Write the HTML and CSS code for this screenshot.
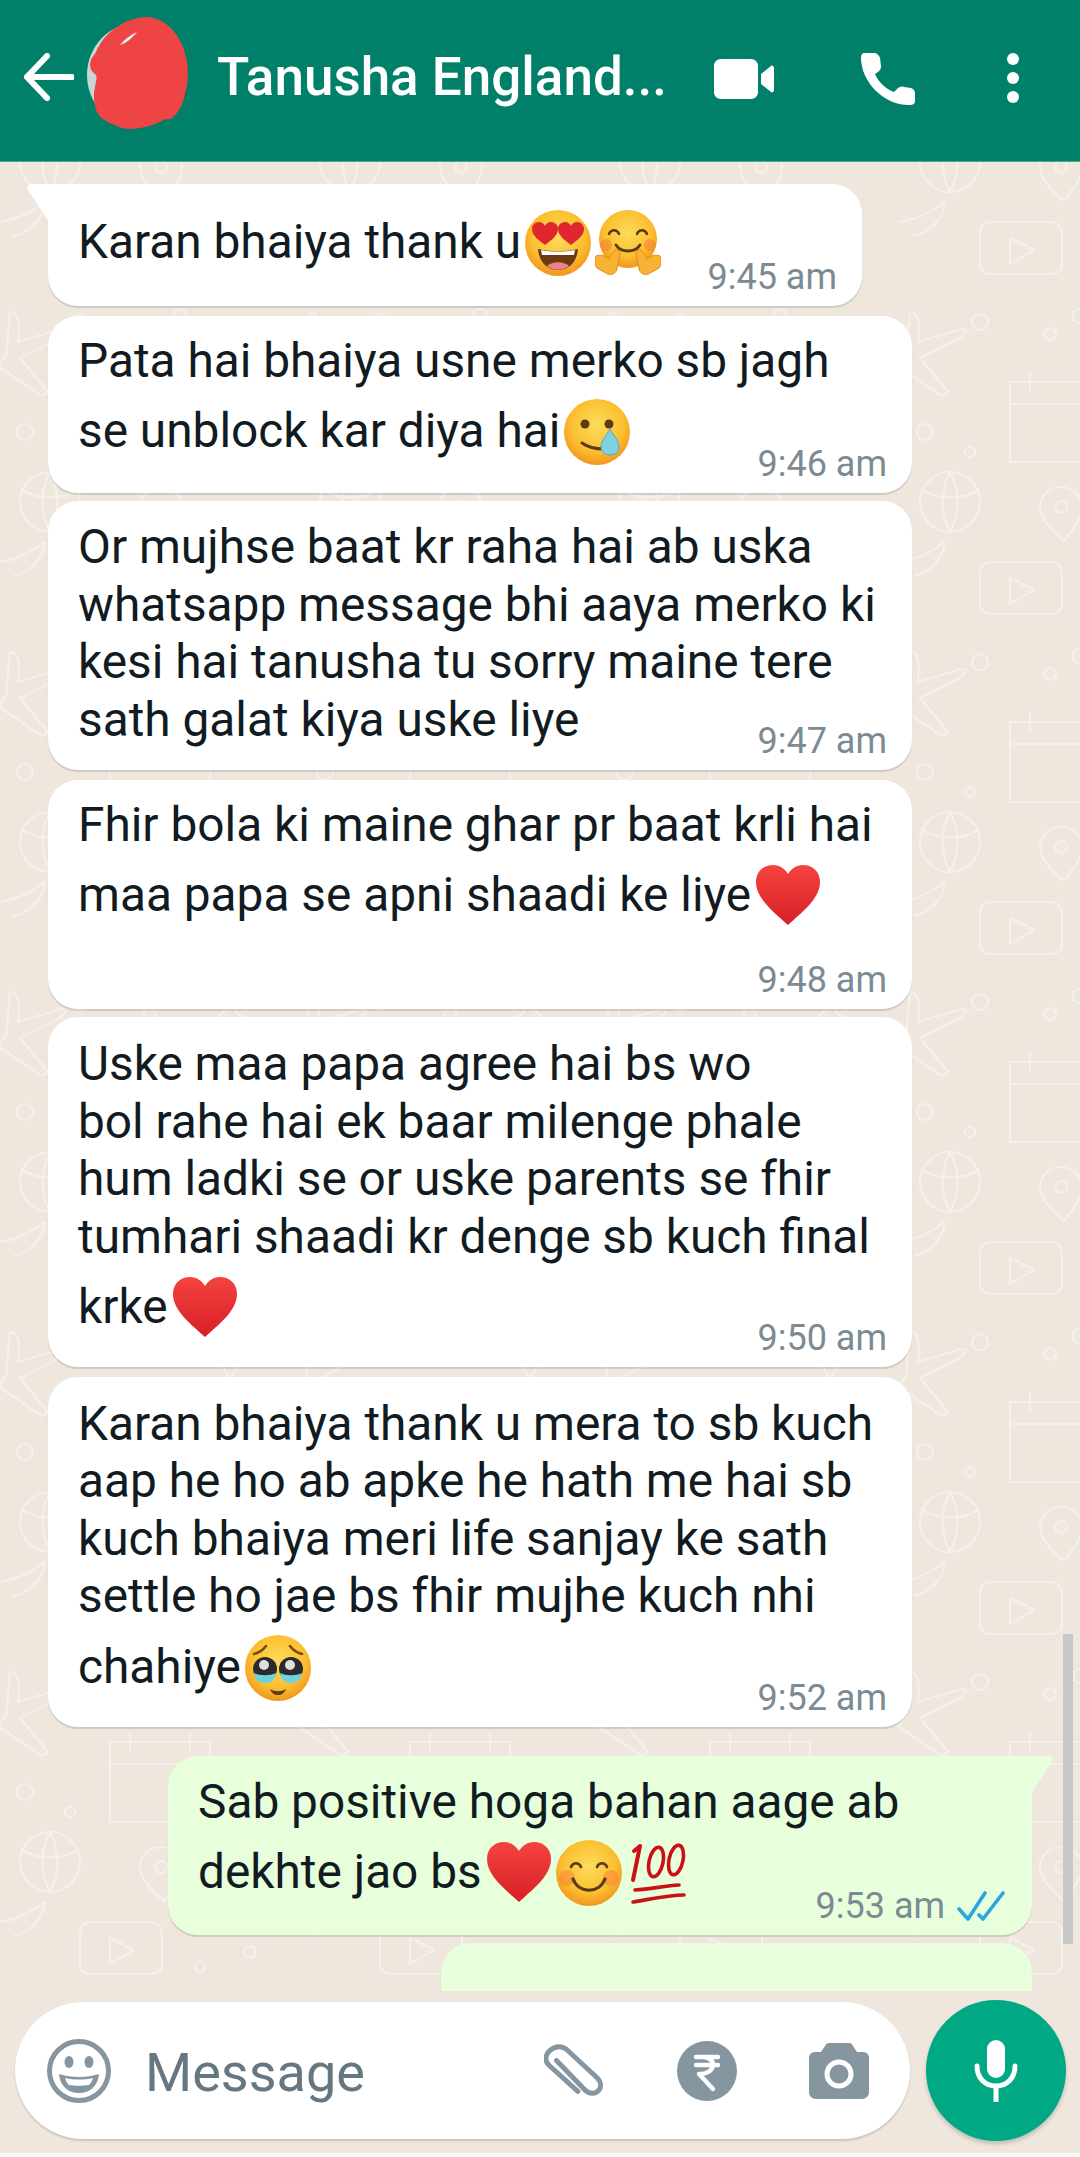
FILE: index.html
```html
<!DOCTYPE html>
<html>
  <head>
    <title>Tanusha England chat</title>
    <link rel="stylesheet" href="styles.css">
  </head>
  <body>
    <svg class="defs" width="0" height="0">
      <defs>
        <radialGradient id="skin" cx="50%" cy="40%" r="62%">
          <stop offset="0" stop-color="#fddc5c"/>
          <stop offset="0.65" stop-color="#fbbf2f"/>
          <stop offset="1" stop-color="#f0911c"/>
        </radialGradient>
        <linearGradient id="red" x1="0" y1="0" x2="0" y2="1">
          <stop offset="0" stop-color="#f4433f"/>
          <stop offset="1" stop-color="#d81f26"/>
        </linearGradient>
        <symbol id="e-hearteyes" viewBox="0 0 66 66">
          <circle cx="33" cy="33" r="33" fill="url(#skin)"/>
          <path d="M20 35C15 31 7 26 7 19c0-4 3-7 7-7 3 0 5 2 6 4 1-2 3-4 6-4 4 0 7 3 7 7 0 7-8 12-13 16z" fill="#e0262e"/>
          <path d="M46 35c-5-4-13-9-13-16 0-4 3-7 7-7 3 0 5 2 6 4 1-2 3-4 6-4 4 0 7 3 7 7 0 7-8 12-13 16z" fill="#e0262e"/>
          <path d="M13 39c13 3 27 3 40 0-1 13-9 21-20 21S14 52 13 39z" fill="#6b3a10"/>
          <path d="M16 40c11 2 23 2 34 0l-1 5H17z" fill="#fff"/>
          <path d="M22 56c6-5 16-5 22 0-6 5-16 5-22 0z" fill="#f0808a"/>
        </symbol>
        <symbol id="e-hug" viewBox="0 0 66 66">
          <circle cx="33" cy="29" r="29" fill="url(#skin)"/>
          <circle cx="11" cy="35" r="6" fill="#f6783c" opacity=".5"/>
          <circle cx="55" cy="35" r="6" fill="#f6783c" opacity=".5"/>
          <path d="M14 24c2-5 8-5 10 0M42 24c2-5 8-5 10 0" fill="none" stroke="#5b3a10" stroke-width="2.4" stroke-linecap="round"/>
          <path d="M21 35c5 8 19 8 24 0" fill="none" stroke="#5b3a10" stroke-width="2.8" stroke-linecap="round"/>
          <path d="M1 46c5-2 10 0 13 3l5-8c2-3 6-1 6 3l-3 15c-1 5-7 7-11 4L2 58c-2-2-3-9-1-12z" fill="#f9b233" stroke="#e38a16" stroke-width="1"/>
          <path d="M65 46c-5-2-10 0-13 3l-5-8c-2-3-6-1-6 3l3 15c1 5 7 7 11 4l9-5c2-2 3-9 1-12z" fill="#f9b233" stroke="#e38a16" stroke-width="1"/>
        </symbol>
        <symbol id="e-tear" viewBox="0 0 66 66">
          <circle cx="33" cy="33" r="33" fill="url(#skin)"/>
          <circle cx="21" cy="25" r="4.5" fill="#5b3a14"/>
          <circle cx="45" cy="25" r="4.5" fill="#5b3a14"/>
          <path d="M18 44c7 5 14 6 22 6" fill="none" stroke="#5b3a14" stroke-width="3" stroke-linecap="round"/>
          <path d="M46 30c3 6 9 11 9 18 0 5-4 8-9 8s-9-3-9-8c0-7 6-12 9-18z" fill="#7fd0e0" stroke="#52a9c4" stroke-width="1"/>
        </symbol>
        <symbol id="e-heart" viewBox="0 0 66 66">
          <path d="M33 62C20 50 1 36 1 19 1 8 9 2 18 2c7 0 12 4 15 9 3-5 8-9 15-9 9 0 17 6 17 17 0 17-19 31-32 43z" fill="url(#red)"/>
        </symbol>
        <symbol id="e-plead" viewBox="0 0 66 66">
          <circle cx="33" cy="33" r="33" fill="url(#skin)"/>
          <path d="M9 19c4-1 9-4 12-8M57 19c-4-1-9-4-12-8" fill="none" stroke="#7a4a12" stroke-width="2.6" stroke-linecap="round"/>
          <circle cx="20" cy="34" r="12" fill="#2d2a2e"/>
          <circle cx="46" cy="34" r="12" fill="#2d2a2e"/>
          <circle cx="19" cy="30" r="5" fill="#fff" opacity=".85"/>
          <circle cx="45" cy="30" r="5" fill="#fff" opacity=".85"/>
          <path d="M9 38c6 3 16 3 22 0-1 7-5 10-11 10S10 45 9 38zM35 38c6 3 16 3 22 0-1 7-5 10-11 10s-10-3-11-10z" fill="#6fd3df"/>
          <path d="M25 54c5 3 11 3 16 0-2 5-5 6-8 6s-6-1-8-6z" fill="#5b3a14"/>
        </symbol>
        <symbol id="e-smile" viewBox="0 0 66 66">
          <circle cx="33" cy="33" r="33" fill="url(#skin)"/>
          <circle cx="11" cy="38" r="8" fill="#f6783c" opacity=".45"/>
          <circle cx="55" cy="38" r="8" fill="#f6783c" opacity=".45"/>
          <path d="M15 27c2-5 8-5 10 0M41 27c2-5 8-5 10 0" fill="none" stroke="#5b3a14" stroke-width="2.6" stroke-linecap="round"/>
          <path d="M17 39c6 15 26 15 32 0" fill="none" stroke="#5b3a14" stroke-width="3.2" stroke-linecap="round"/>
        </symbol>
        <symbol id="e-hundred" viewBox="0 0 60 66">
          <g fill="none" stroke="#cc1016" stroke-linecap="round">
            <path d="M11 6L4 40M5 11l6-5" stroke-width="4"/>
            <ellipse cx="27" cy="22" rx="7" ry="15" transform="rotate(12 27 22)" stroke-width="3.6"/>
            <ellipse cx="47" cy="20" rx="7" ry="15" transform="rotate(12 47 20)" stroke-width="3.6"/>
            <path d="M6 50c15-1 30-4 44-5" stroke-width="3.6"/>
            <path d="M4 62c18-3 36-7 51-7" stroke-width="3.6"/>
          </g>
        </symbol>
      </defs>
    </svg>

    <div class="page">
      <header class="topbar">
        <svg class="back" viewBox="0 0 50 48"><path d="M23 3L3 24l20 21M4 24h44" fill="none" stroke="#fff" stroke-width="6" stroke-linecap="round"/></svg>
        <svg class="avatar" viewBox="0 0 103 114">
          <ellipse cx="51" cy="58" rx="50" ry="52" fill="#c9d6d6"/>
          <path d="M96 70l3-4 1 12-6 10z" fill="#2c3350"/>
          <path d="M9 37C20 10 45 0 62 0c20 2 35 20 39 45 3 20-3 45-12 53-3 5-8 5-10 4-16 10-38 12-46 8-7-4-22-6-24-22C5 73 14 60 9 57 2 53 3 42 9 37z" fill="#ef4444"/>
          <path d="M34 28c5-6 10-10 17-13-5 6-10 11-17 13z" fill="#e8eeee"/>
        </svg>
        <h1 class="contact">Tanusha England...</h1>
        <svg class="video" viewBox="0 0 60 40"><path d="M7 0h30c4 0 7 3 7 7v26c0 4-3 7-7 7H7c-4 0-7-3-7-7V7c0-4 3-7 7-7zM47 15l10-8c1-1 3 0 3 2v22c0 2-2 3-3 2l-10-8z" fill="#fff"/></svg>
        <svg class="phone" viewBox="0 0 54 52"><path d="M4 0h9c3 0 5 2 6 5l1 8c0 3-1 4-3 6l-3 2c4 9 11 15 19 18l3-3c2-2 4-3 7-2l7 1c3 1 4 3 4 6v7c0 3-2 4-6 4C22 52 0 28 0 5c0-3 1-5 4-5z" fill="#fff"/></svg>
        <div class="dots"><i></i><i></i><i></i></div>
      </header>

      <main class="chat">
        <svg class="wallpaper" width="1080" height="1995">
          <defs>
            <pattern id="doodles" width="300" height="340" patternUnits="userSpaceOnUse" patternTransform="translate(-20 130)">
              <g fill="none" stroke="#f5f0ea" stroke-width="2.2" stroke-linecap="round" stroke-linejoin="round">
                <path d="M30 20c8 0 10 8 8 30l40-12c14-4 6 6-2 10L40 66l28 34-6 4-44-30 8-10z"/>
                <circle cx="100" cy="30" r="8"/><circle cx="170" cy="42" r="6"/><circle cx="200" cy="24" r="7"/>
                <path d="M250 26c4 14 8 18 22 22-14 4-18 8-22 22-4-14-8-18-22-22 14-4 18-8 22-22z"/>
                <path d="M130 90h100v80H130zM150 80v18M210 80v18M130 112h100"/>
                <circle cx="45" cy="140" r="8"/><circle cx="90" cy="160" r="5"/>
                <circle cx="70" cy="210" r="30"/><path d="M42 198c18 10 40 10 56 0M70 180c-10 20-10 40 0 60M70 180c10 20 10 40 0 60"/>
                <path d="M180 195c14 0 22 10 22 20 0 14-14 28-18 34-10-8-24-22-24-34 0-10 8-20 20-20z"/><circle cx="181" cy="215" r="6"/>
                <circle cx="250" cy="190" r="9"/><circle cx="275" cy="130" r="6"/>
                <path d="M20 270c14-2 30-8 44-20 2 10-10 30-30 34M110 270h60c8 0 12 5 12 12v30c0 6-4 10-12 10h-60c-6 0-10-4-10-10v-30c0-7 4-12 10-12zM130 286l24 12-24 14z"/>
                <circle cx="235" cy="262" r="12"/><circle cx="270" cy="300" r="6"/><circle cx="220" cy="315" r="5"/>
              </g>
            </pattern>
          </defs>
          <rect width="1080" height="1995" fill="url(#doodles)"/>
        </svg>

        <div class="msg in first narrow">
          <p class="text">Karan bhaiya thank u<svg class="emoji"><use href="#e-hearteyes"/></svg><svg class="emoji"><use href="#e-hug"/></svg></p>
          <span class="time">9:45 am</span>
        </div>
        <div class="msg in wide-gap">
          <p class="text">Pata hai bhaiya usne merko sb jagh<br>se unblock kar diya hai<svg class="emoji"><use href="#e-tear"/></svg></p>
          <span class="time">9:46 am</span>
        </div>
        <div class="msg in plain">
          <p class="text">Or mujhse baat kr raha hai ab uska<br>whatsapp message bhi aaya merko ki<br>kesi hai tanusha tu sorry maine tere<br>sath galat kiya uske liye</p>
          <span class="time">9:47 am</span>
        </div>
        <div class="msg in own-row wide-gap">
          <p class="text">Fhir bola ki maine ghar pr baat krli hai<br>maa papa se apni shaadi ke liye<svg class="emoji"><use href="#e-heart"/></svg></p>
          <span class="time">9:48 am</span>
        </div>
        <div class="msg in long">
          <p class="text">Uske maa papa agree hai bs wo<br>bol rahe hai ek baar milenge phale<br>hum ladki se or uske parents se fhir<br>tumhari shaadi kr denge sb kuch final<br>krke<svg class="emoji"><use href="#e-heart"/></svg></p>
          <span class="time">9:50 am</span>
        </div>
        <div class="msg in long wide-gap">
          <p class="text">Karan bhaiya thank u mera to sb kuch<br>aap he ho ab apke he hath me hai sb<br>kuch bhaiya meri life sanjay ke sath<br>settle ho jae bs fhir mujhe kuch nhi<br>chahiye<svg class="emoji"><use href="#e-plead"/></svg></p>
          <span class="time">9:52 am</span>
        </div>
        <div class="msg out first">
          <p class="text">Sab positive hoga bahan aage ab<br>dekhte jao bs<svg class="emoji"><use href="#e-heart"/></svg><svg class="emoji"><use href="#e-smile"/></svg><svg class="emoji"><use href="#e-hundred"/></svg></p>
          <span class="time">9:53 am <svg class="ticks" viewBox="0 0 48 30"><path d="M2 18l9 10L28 2M22 24l4 4L46 2" fill="none" stroke="#2ba5e0" stroke-width="3.6" stroke-linecap="round" stroke-linejoin="round"/></svg></span>
        </div>
        <div class="msg out stub"></div>

        <div class="scrollbar"></div>
      </main>

      <footer class="composer">
        <div class="inputbox">
          <svg class="smiley" viewBox="0 0 64 64"><circle cx="32" cy="32" r="29.5" fill="none" stroke="#8696a0" stroke-width="5"/><ellipse cx="22" cy="23" rx="4.5" ry="6" fill="#8696a0"/><ellipse cx="42" cy="23" rx="4.5" ry="6" fill="#8696a0"/><path d="M12 35c12 4 28 4 40 0-1 12-9 19-20 19S13 47 12 35z" fill="#8696a0"/><path d="M18 39c9 2 19 2 28 0-1 3-2 5-4 7-6 1-14 1-20 0-2-2-3-4-4-7z" fill="#fff"/></svg>
          <span class="placeholder">Message</span>
          <svg class="clip" viewBox="0 0 62 58"><path d="M17 15l25 32c4 5 10 6 14 2 3-3 3-8 0-12L29 6c-4-5-11-6-17-2C6 8 5 14 9 19l26 29" transform="translate(-3 2) rotate(-6 30 30)" fill="none" stroke="#8696a0" stroke-width="5" stroke-linecap="round" stroke-linejoin="round"/></svg>
          <svg class="rupee" viewBox="0 0 60 60"><circle cx="30" cy="30" r="30" fill="#8696a0"/><path d="M19 16h22M19 24h22M24 16c10 0 12 4 12 8s-4 9-14 9l14 15" fill="none" stroke="#fff" stroke-width="4.4" stroke-linecap="round" stroke-linejoin="round"/></svg>
          <svg class="camera" viewBox="0 0 60 56"><path d="M20 0h20c2 0 3 1 4 3l4 6h6c4 0 6 3 6 6v34c0 4-3 7-7 7H7c-4 0-7-3-7-7V15c0-3 2-6 6-6h6l4-6c1-2 2-3 4-3z" fill="#8696a0"/><circle cx="30" cy="31" r="12" fill="none" stroke="#fff" stroke-width="5"/></svg>
        </div>
        <button class="mic">
          <svg viewBox="0 0 44 62"><rect x="13" y="0" width="18" height="38" rx="9" fill="#fff"/><path d="M3 26c0 12 8 20 19 20s19-8 19-20M22 46v15" fill="none" stroke="#fff" stroke-width="5" stroke-linecap="round"/></svg>
        </button>
      </footer>
      <div class="navstrip"></div>
    </div>
  </body>
</html>
```

FILE: styles.css
```css
body {
  margin: 0;
  font-family: Roboto, "Liberation Sans", sans-serif;
  color: #111b21;
}

.defs {
  position: absolute;
}

.page {
  width: 1080px;
  height: 2157px;
  display: flex;
  flex-direction: column;
  overflow: hidden;
  background: #efe7de;
}

/* top bar */
.topbar {
  flex: none;
  height: 162px;
  box-sizing: border-box;
  border-bottom: 1px solid #4fa58f;
  background: #008069;
  display: flex;
  align-items: flex-start;
  color: #fff;
}
.back {
  width: 50px;
  height: 48px;
  margin: 53px 0 0 24px;
}
.avatar {
  width: 103px;
  height: 114px;
  margin: 17px 0 0 12px;
}
.contact {
  margin: 47px 0 0 28px;
  width: 497px;
  font-size: 53px;
  line-height: 60px;
  font-weight: 500;
  white-space: nowrap;
}
.video {
  width: 60px;
  height: 40px;
  margin-top: 59px;
}
.phone {
  width: 54px;
  height: 52px;
  margin: 53px 0 0 87px;
}
.dots {
  margin: 53px 0 0 92px;
  display: flex;
  flex-direction: column;
  gap: 7px;
}
.dots i {
  width: 12px;
  height: 12px;
  border-radius: 50%;
  background: #fff;
}

/* messages */
.chat {
  flex: none;
  height: 1829px;
  box-sizing: border-box;
  padding-top: 22px;
  position: relative;
  overflow: hidden;
  display: flex;
  flex-direction: column;
  align-items: flex-start;
  gap: 8px;
}
.wallpaper {
  position: absolute;
  left: 0;
  top: 0;
}
.msg {
  flex: none;
  position: relative;
  box-sizing: border-box;
  display: flex;
  flex-direction: column;
  width: 864px;
  padding: 17px 25px 9px 30px;
  border-radius: 30px;
  background: #fff;
  box-shadow: 0 2px 1px rgba(0, 0, 0, 0.13);
}
.msg.narrow {
  width: 814px;
}
.msg.plain {
  padding-top: 18px;
}
.msg.long {
  padding-top: 19px;
}
.msg.wide-gap {
  margin-top: 2px;
}
.msg.in {
  margin-left: 48px;
}
.msg.out {
  margin: 21px 0 0 168px;
  padding: 18px 27px 9px 30px;
  background: #e7ffdb;
}
.msg.first.in {
  border-top-left-radius: 0;
}
.msg.first.out {
  border-top-right-radius: 0;
}
.msg.first::before {
  content: "";
  position: absolute;
  top: 0;
  width: 22px;
  height: 38px;
  background: inherit;
}
.msg.first.in::before {
  left: -21px;
  clip-path: path("M4 0H22V38L1 6Q-1 0 4 0Z");
}
.msg.first.out::before {
  right: -21px;
  clip-path: path("M18 0H0V38L21 6Q23 0 18 0Z");
}
.msg.out.stub {
  margin: 0 0 0 441px;
  padding: 0;
  width: 591px;
  height: 80px;
}
.text {
  margin: 0;
  font-size: 47.8px;
  line-height: 57.4px;
  white-space: nowrap;
}
.emoji {
  width: 66px;
  height: 66px;
  margin: 9px 0 0 4px;
  vertical-align: -18px;
}
.time {
  align-self: flex-end;
  font-size: 36px;
  line-height: 40px;
  color: #7b8a93;
  white-space: nowrap;
  margin-top: -21px;
}
.narrow .time {
  margin-top: -19px;
}
.plain .time {
  margin-top: -28px;
}
.long .time {
  margin-top: -23px;
}
.own-row .time {
  margin-top: 31px;
}
.out .time {
  margin-top: -20px;
}
.ticks {
  width: 48px;
  height: 30px;
  margin-left: 3px;
  vertical-align: -3px;
}
.scrollbar {
  position: absolute;
  left: 1063px;
  top: 1472px;
  width: 10px;
  height: 310px;
  background: #c8c8c6;
}

/* input row */
.composer {
  flex: none;
  display: flex;
  align-items: center;
  gap: 16px;
  padding: 9px 14px 0 15px;
}
.inputbox {
  flex: none;
  width: 895px;
  height: 137px;
  box-sizing: border-box;
  border-radius: 69px;
  background: #fff;
  box-shadow: 0 2px 2px rgba(0, 0, 0, 0.15);
  display: flex;
  align-items: center;
}
.smiley {
  width: 64px;
  height: 64px;
  margin-left: 32px;
}
.placeholder {
  margin: 3px 0 0 34px;
  width: 185px;
  font-size: 54px;
  white-space: nowrap;
  color: #667781;
}
.clip {
  width: 62px;
  height: 58px;
  margin-left: 214px;
}
.rupee {
  width: 60px;
  height: 60px;
  margin-left: 71px;
}
.camera {
  width: 60px;
  height: 56px;
  margin-left: 72px;
}
.mic {
  width: 140px;
  height: 141px;
  padding: 0;
  border: none;
  border-radius: 50%;
  background: #00a884;
  box-shadow: 0 3px 4px rgba(0, 0, 0, 0.18);
  display: flex;
  align-items: center;
  justify-content: center;
}
.mic svg {
  width: 44px;
  height: 62px;
}
.navstrip {
  flex: 1;
  margin-top: 12px;
  background: #f7f8fa;
}
```
